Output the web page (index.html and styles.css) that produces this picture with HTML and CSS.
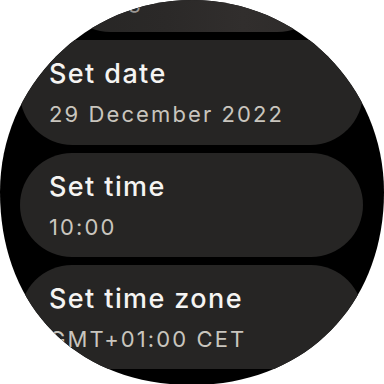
FILE: index.html
```html
<!DOCTYPE html>
<html lang="en">
<head>
<meta charset="utf-8">
<title>Date &amp; time</title>
<link rel="stylesheet" href="styles.css">
</head>
<body>
<div class="screen">
  <div class="list">
    <div class="chip chip-top">
      <div class="title">Automatic date</div>
      <div class="sub">Using</div>
    </div>
    <div class="chip">
      <div class="title">Set date</div>
      <div class="sub">29 December 2022</div>
    </div>
    <div class="chip chip-mid">
      <div class="title">Set time</div>
      <div class="sub">10:00</div>
    </div>
    <div class="chip chip-mid">
      <div class="title">Set time zone</div>
      <div class="sub">GMT+01:00 CET</div>
    </div>
  </div>
</div>
</body>
</html>
```
FILE: styles.css
```css
html, body {
  margin: 0;
  padding: 0;
  background: #ffffff;
}
.screen {
  width: 384px;
  height: 384px;
  overflow: hidden;
  background: #000000;
  clip-path: path('M192,0 C298,0 384,86 384,192 C384,305 305,385 192,385 C77,385 0,307 0,192 C0,86 86,0 192,0 Z');
}
.list {
  display: flex;
  flex-direction: column;
  gap: 8px;
  margin-top: -73px;
  padding: 0 21px 0 20px;
}
.chip {
  height: 105px;
  box-sizing: border-box;
  border-radius: 53px;
  background: #262524;
  padding: 18px 20px 0 29px;
  font-family: Inter, "Liberation Sans", sans-serif;
  white-space: nowrap;
  overflow: hidden;
}
.chip-mid {
  height: 104px;
}
.chip-top {
  margin: 0 33px 0 38px;
  padding-left: 15px;
  background: linear-gradient(90deg, #262524 0%, #2b2928 40%, #312e2d 68%, #2c2a29 100%);
}
.title {
  font-size: 27px;
  line-height: 32px;
  font-weight: 500;
  letter-spacing: 1.4px;
  color: #f5f4f2;
}
.sub {
  margin-top: 10px;
  font-size: 22px;
  line-height: 28px;
  letter-spacing: 2.1px;
  color: #c9c5be;
}
.chip-top .title,
.chip-top .sub {
  color: #9a9794;
}
.chip-top .sub {
  margin-top: 9px;
}
```
